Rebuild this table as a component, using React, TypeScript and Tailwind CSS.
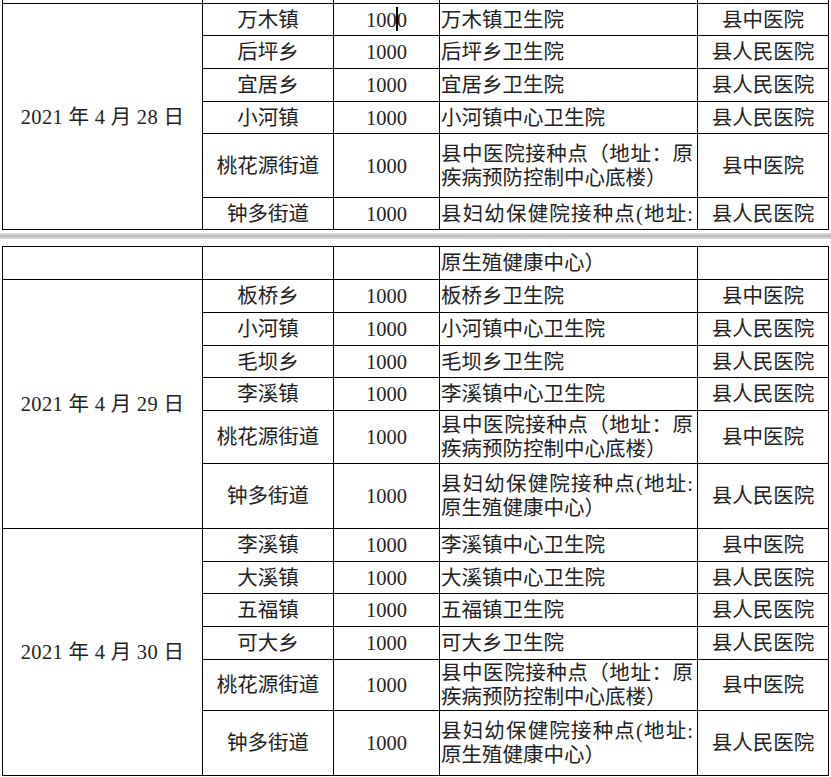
import React from "react";

type Row = { town: string; detail: string[]; hospital: string; fill?: boolean; caret?: boolean };
type Day = { date: string; rows: Row[] };

const FONT = {
  fontFamily: '"Liberation Serif", "Noto Sans CJK SC", serif',
};

const cell = "border-r border-b border-black flex items-center min-w-0";

const TAOHUA = ["县中医院接种点（地址：原", "疾病预防控制中心底楼）"];
const FUYOU = ["县妇幼保健院接种点(地址:", "原生殖健康中心）"];

const day28: Day = {
  date: "2021 年 4 月 28 日",
  rows: [
    { town: "万木镇", detail: ["万木镇卫生院"], hospital: "县中医院", caret: true },
    { town: "后坪乡", detail: ["后坪乡卫生院"], hospital: "县人民医院" },
    { town: "宜居乡", detail: ["宜居乡卫生院"], hospital: "县人民医院" },
    { town: "小河镇", detail: ["小河镇中心卫生院"], hospital: "县人民医院" },
    { town: "桃花源街道", detail: TAOHUA, hospital: "县中医院" },
    { town: "钟多街道", detail: [FUYOU[0]], hospital: "县人民医院", fill: true },
  ],
};

const day29: Day = {
  date: "2021 年 4 月 29 日",
  rows: [
    { town: "板桥乡", detail: ["板桥乡卫生院"], hospital: "县中医院" },
    { town: "小河镇", detail: ["小河镇中心卫生院"], hospital: "县人民医院" },
    { town: "毛坝乡", detail: ["毛坝乡卫生院"], hospital: "县人民医院" },
    { town: "李溪镇", detail: ["李溪镇中心卫生院"], hospital: "县人民医院" },
    { town: "桃花源街道", detail: TAOHUA, hospital: "县中医院" },
    { town: "钟多街道", detail: FUYOU, hospital: "县人民医院" },
  ],
};

const day30: Day = {
  date: "2021 年 4 月 30 日",
  rows: [
    { town: "李溪镇", detail: ["李溪镇中心卫生院"], hospital: "县中医院" },
    { town: "大溪镇", detail: ["大溪镇中心卫生院"], hospital: "县人民医院" },
    { town: "五福镇", detail: ["五福镇卫生院"], hospital: "县人民医院" },
    { town: "可大乡", detail: ["可大乡卫生院"], hospital: "县人民医院" },
    { town: "桃花源街道", detail: TAOHUA, hospital: "县中医院" },
    { town: "钟多街道", detail: FUYOU, hospital: "县人民医院" },
  ],
};

// 明细列：多行时首行两端对齐
const Detail = ({ lines, fill }: { lines: string[]; fill?: boolean }) => (
  <div className={`${cell} pl-[1px] pr-[4px]`}>
    <div className="w-full flex flex-col">
      {lines.map((l, i) => (
        <span
          key={i}
          className={
            i < lines.length - 1 || fill
              ? "block text-justify [text-align-last:justify]"
              : "block text-left"
          }
        >
          {l}
        </span>
      ))}
    </div>
  </div>
);

const DayBlock = ({ day }: { day: Day }) => (
  <>
    <div className={`${cell} row-span-6 justify-center tracking-[0.3px]`}>{day.date}</div>
    {day.rows.map((r, i) => (
      <React.Fragment key={i}>
        <div className={`${cell} justify-center`}>{r.town}</div>
        <div className={`${cell} justify-center`}>
          {r.caret ? (
            <span>
              100
              <span className="relative">
                <span className="absolute left-[-1px] top-[-2px] w-[2px] h-[24px] bg-black" />
              </span>
              0
            </span>
          ) : (
            "1000"
          )}
        </div>
        <Detail lines={r.detail} fill={r.fill} />
        <div className={`${cell} justify-center`}>{r.hospital}</div>
      </React.Fragment>
    ))}
  </>
);

export default function App() {
  return (
    <div
      className="w-[831px] h-[777px] bg-white overflow-hidden text-[20.5px] leading-[24px] text-[#222]"
      style={FONT}
    >
      {/* 上页表格（顶部残留一行） */}
      <div className="ml-[2px] w-[827px] grid grid-cols-[200px_131px_106px_258px_131px] grid-rows-[4px_32px_33px_33px_32px_64px_32px] border-l border-black">
        <div className={cell} />
        <div className={cell} />
        <div className={cell} />
        <div className={cell} />
        <div className={cell} />
        <DayBlock day={day28} />
      </div>

      {/* 分页线 */}
      <div className="h-[16px] pt-[3px]">
        <div className="h-[6px] w-full bg-linear-to-b from-[#e4e4e4] via-[#b9b9b9] to-[#dedede]" />
      </div>

      {/* 下页表格 */}
      <div className="ml-[2px] w-[827px] grid grid-cols-[200px_131px_106px_258px_131px] grid-rows-[33px_33px_33px_32px_33px_53px_65px_33px_32px_33px_33px_51px_65px] border-l border-t border-black">
        <div className={cell} />
        <div className={cell} />
        <div className={cell} />
        <Detail lines={[FUYOU[1]]} />
        <div className={cell} />
        <DayBlock day={day29} />
        <DayBlock day={day30} />
      </div>
    </div>
  );
}
